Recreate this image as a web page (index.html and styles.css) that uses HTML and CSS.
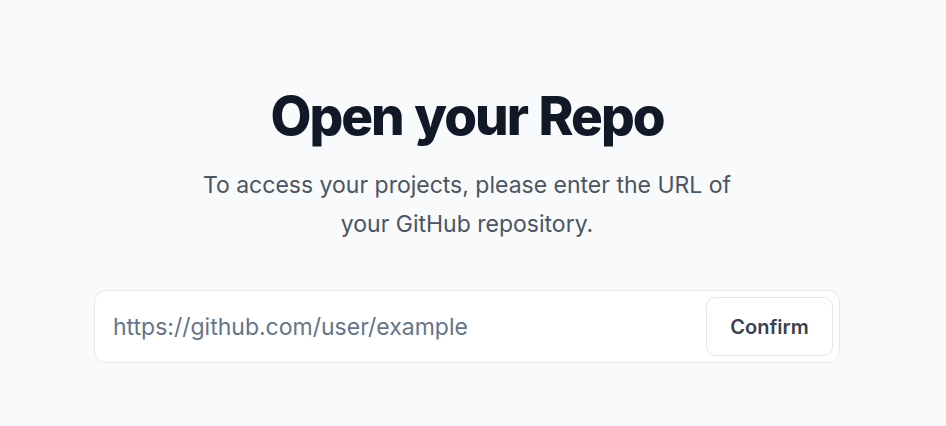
FILE: index.html
```html
<!DOCTYPE html>
<html lang="en">
<head>
<meta charset="utf-8">
<title>Open your Repo</title>
<link rel="stylesheet" href="styles.css">
</head>
<body>
<main class="page">
  <section class="panel">
    <h1 class="title">Open your Repo</h1>
    <p class="lead">To access your projects, please enter the URL of<br>your GitHub repository.</p>
    <form class="repo-form">
      <input class="repo-input" type="text" placeholder="https://github.com/user/example">
      <button class="confirm" type="button">Confirm</button>
    </form>
  </section>
</main>
</body>
</html>
```
FILE: styles.css
```css
* { box-sizing: border-box; }
html, body { margin: 0; padding: 0; }
body {
  background: #f9fafb;
  font-family: Inter, "Noto Sans", sans-serif;
  height: 426px;
  overflow: hidden;
}
.page {
  padding: 80px 12px 0 0;
  display: flex;
  justify-content: center;
}
.panel {
  width: 746px;
  display: flex;
  flex-direction: column;
  align-items: center;
}
.title {
  margin: 0;
  font-size: 53px;
  font-weight: 800;
  letter-spacing: -2px;
  word-spacing: 2px;
  color: #111827;
  line-height: 72px;
}
.lead {
  margin: 14px 0 0;
  font-size: 23px;
  line-height: 39px;
  color: #4b5563;
  text-align: center;
}
.repo-form {
  margin-top: 46px;
  width: 746px;
  height: 73px;
  background: #fff;
  border: 1px solid #e5e7eb;
  border-radius: 12px;
  display: flex;
  align-items: center;
  padding: 0 6px 0 18px;
  gap: 12px;
}
.repo-input {
  flex: 1;
  border: none;
  outline: none;
  background: transparent;
  font-family: inherit;
  font-size: 23px;
  color: #111827;
  padding: 0;
}
.repo-input::placeholder { color: #64748b; }
.confirm {
  width: 127px;
  height: 59px;
  border: 1px solid #e5e7eb;
  border-radius: 9px;
  background: #fff;
  font-family: inherit;
  font-size: 20px;
  font-weight: 600;
  color: #374151;
}
```
